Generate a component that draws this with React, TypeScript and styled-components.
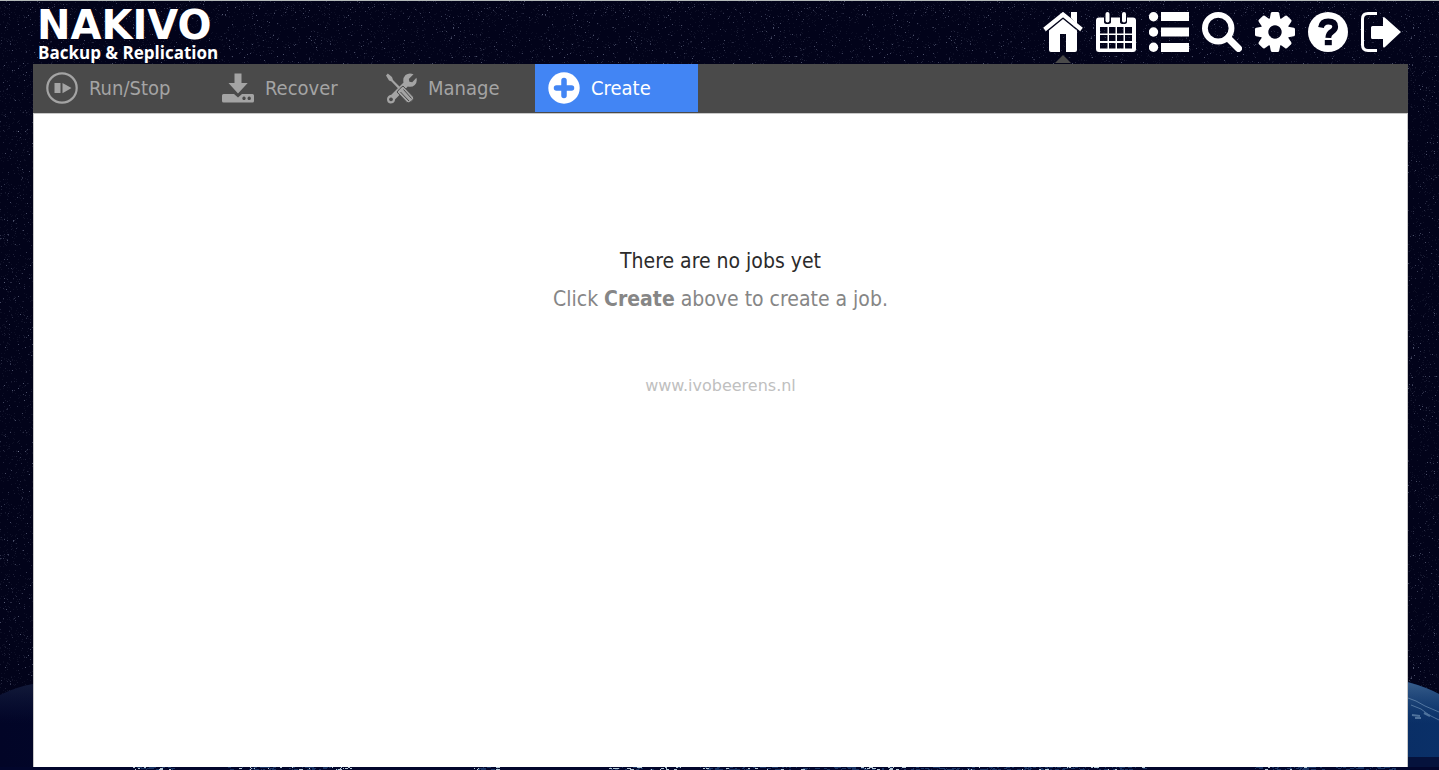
import React from 'react';
import styled, { createGlobalStyle } from 'styled-components';

const GlobalStyle = createGlobalStyle`
  *, *::before, *::after { box-sizing: border-box; }
  body {
    margin: 0;
    background: #02031a;
    font-family: "DejaVu Sans Condensed", "DejaVu Sans", Tahoma, sans-serif;
    font-stretch: condensed;
  }
`;

const Page = styled.div`
  position: relative;
  isolation: isolate;
  display: flex;
  flex-direction: column;
  min-height: 100vh;
  padding: 0 31px 3px 33px;
  border-top: 1px solid #b4bab9;
  overflow: hidden;
`;

const Sky = styled.svg`
  position: absolute;
  inset: 0;
  z-index: -1;
  width: 100%;
  height: 100%;
`;

const Header = styled.header`
  display: flex;
  justify-content: space-between;
  height: 63px;
  padding: 0 7px 0 4px;
`;

const Brand = styled.a`
  display: flex;
  flex-direction: column;
  padding-top: 5px;
  color: #fff;
  text-decoration: none;
  white-space: nowrap;
`;

const BrandName = styled.span`
  font: 700 40px/38px "DejaVu Sans", sans-serif;
`;

const BrandTag = styled.span`
  padding-left: 1px;
  font: 700 17px/18px "Open Sans", sans-serif;
`;

const MainNav = styled.nav`
  display: flex;
  gap: 13px;
  padding-top: 11px;
`;

const NavButton = styled.button<{ $current?: boolean }>`
  position: relative;
  width: 40px;
  height: 40px;
  padding: 0;
  border: 0;
  background: none;
  color: #fff;
  cursor: pointer;

  &::after {
    content: "";
    display: ${(p) => (p.$current ? 'block' : 'none')};
    position: absolute;
    top: 43px;
    left: 12px;
    border: solid transparent;
    border-width: 0 8px 8px;
    border-bottom-color: #4a4a4a;
  }
`;

const NavIcon = styled.svg`
  display: block;
  width: 40px;
  height: 40px;
`;

const Toolbar = styled.div`
  display: flex;
  height: 49px;
  padding-bottom: 1px;
  background: #4a4a4a;
`;

const ToolButton = styled.button<{ $active?: boolean; $wide?: boolean }>`
  display: flex;
  align-items: center;
  gap: 11px;
  width: ${(p) => (p.$wide ? 176 : 163)}px;
  padding: 0 13px;
  border: 0;
  background: ${(p) => (p.$active ? '#4285f4' : 'transparent')};
  color: ${(p) => (p.$active ? '#fff' : '#a4a4a4')};
  font: inherit;
  font-size: 20px;
  line-height: 24px;
  white-space: nowrap;
  cursor: pointer;
`;

const ToolIcon = styled.svg`
  flex: none;
  width: 32px;
  height: 32px;
`;

const Content = styled.main`
  flex: 1;
  display: flex;
  flex-direction: column;
  align-items: center;
  padding-top: 128px;
  border: 1px solid #c8c8c8;
  border-bottom: 0;
  background: #fff;
  text-align: center;
`;

const Title = styled.h1`
  margin: 0;
  color: #2b2b2b;
  font-size: 21px;
  font-weight: 400;
  line-height: 38px;
`;

const Hint = styled.p`
  margin: 0;
  color: #868686;
  font-size: 21px;
  line-height: 38px;
`;

const SiteLink = styled.a`
  margin-top: 56px;
  color: #c0c0c0;
  font: 16px/24px "DejaVu Sans", Verdana, sans-serif;
  text-decoration: none;
`;

const makeRandom = (start: number) => {
  let seed = start;
  return () => {
    seed = (seed * 1103515245 + 12345) % 2147483648;
    return seed / 2147483648;
  };
};

/* Deterministic star field, repeated as a tile. */
const TILE = 320;
const stars = (() => {
  const next = makeRandom(7);
  return Array.from({ length: 8000 }, () => ({
    x: Math.floor(next() * TILE),
    y: Math.floor(next() * TILE),
    o: 0.06 + Math.pow(next(), 6) * 0.36,
  }));
})();

/* City lights and clouds along the bottom edge of the window: start, end, share of bright ones. */
const lights = (() => {
  const next = makeRandom(31);
  const zones = [
    [130, 180, 0.2],
    [228, 335, 0.25],
    [332, 356, 0.8],
    [470, 502, 0.3],
    [608, 650, 0.3],
    [650, 682, 0.7],
    [700, 860, 0.15],
    [860, 910, 0.7],
    [910, 1150, 0.12],
    [1255, 1400, 0.05],
  ];
  return zones.flatMap(([from, to, share]) =>
    Array.from({ length: Math.round((to - from) / 2) }, () => ({
      x: from + Math.floor(next() * (to - from - 4)),
      y: 766 + Math.floor(next() * 3),
      w: 1 + Math.floor(next() * 4),
      bright: next() < share,
    })),
  );
})();

function Background() {
  return (
    <Sky viewBox="0 0 1439 769" preserveAspectRatio="none" aria-hidden="true">
      <defs>
        <pattern id="stars" width={TILE} height={TILE} patternUnits="userSpaceOnUse">
          {stars.map((s, i) => (
            <rect key={i} x={s.x} y={s.y} width="1" height="1" fill="#b9c2e0" opacity={s.o} />
          ))}
        </pattern>
        <linearGradient id="earth" x1="0" x2="1" y1="0" y2="0">
          <stop offset="0" stopColor="#020527" />
          <stop offset="0.5" stopColor="#04103a" />
          <stop offset="1" stopColor="#0a3068" />
        </linearGradient>
        <linearGradient id="haze" x1="0" x2="0" y1="680" y2="722" gradientUnits="userSpaceOnUse">
          <stop offset="0" stopColor="#4b7099" stopOpacity="0.75" />
          <stop offset="1" stopColor="#204d80" stopOpacity="0" />
        </linearGradient>
        <linearGradient id="dusk" x1="0" x2="0" y1="680" y2="722" gradientUnits="userSpaceOnUse">
          <stop offset="0" stopColor="#1c2642" stopOpacity="0.7" />
          <stop offset="1" stopColor="#101a40" stopOpacity="0" />
        </linearGradient>
      </defs>
      <rect width="1439" height="769" fill="#02031a" />
      <rect width="1439" height="769" fill="url(#stars)" />
      <path d="M0 694 Q16 686 33 683 Q720 420 1408 681 Q1426 686 1439 693 V769 H0Z" fill="url(#earth)" />
      <path d="M0 694 Q16 686 33 683 V730 H0Z" fill="url(#dusk)" />
      <path d="M1407 681 Q1426 686 1439 693 V735 H1407Z" fill="url(#haze)" />
      <g fill="none" stroke="#8fb0cf" opacity="0.5">
        <path d="M1408 697l8 3 9 5 14 6M1411 704l10 4 8 6 10 5" />
        <path d="M1412 714l8 1M1415 717l6 0M1424 712l6 3" strokeWidth="2" />
      </g>
      <rect x="1407" y="756" width="32" height="13" fill="#05123c" />
      <rect y="766" width="1439" height="3" fill="#02062c" />
      {lights.map((l, i) => (
        <rect key={i} x={l.x} y={l.y} width={l.w} height="1" fill={l.bright ? '#b4c8d6' : '#1a3464'} />
      ))}
    </Sky>
  );
}

const gearTeeth = [0, 45, 90, 135, 180, 225, 270, 315];

const navItems: { label: string; current?: boolean; icon: React.ReactNode }[] = [
  {
    label: 'Home',
    current: true,
    icon: (
      <>
        <path d="M28 0h6v12l-6-6z" fill="currentColor" />
        <path d="M1.500 17.500 20 2.500l18.500 15" fill="none" stroke="currentColor" strokeWidth="4.200" />
        <path d="M20 7 34 18.500V38q0 2-2 2h-9V22h-6v18H8q-2 0-2-2V18.500z" fill="currentColor" />
      </>
    ),
  },
  {
    label: 'Calendar',
    icon: (
      <>
        <path
          d="M3 5.500h5V10q0 2 3.500 2T15 10V5.500h9V10q0 2 3.500 2T31 10V5.500h6q3 0 3 3V37q0 3-3 3H3q-3 0-3-3V8.500q0-3 3-3zM4 15v6.500h7.500V15zm9 0v6.500h6.500V15zm8 0v6.500h6.500V15zm8 0v6.500h7V15zM4 23v6h7.500v-6zm9 0v6h6.500v-6zm8 0v6h6.500v-6zm8 0v6h7v-6zM4 31v5.500h7.500V31zm9 0v5.500h6.500V31zm8 0v5.500h6.500V31zm8 0v5.500h7V31z"
          fill="currentColor"
          fillRule="evenodd"
        />
        <rect x="9.500" y="0" width="4" height="10.500" rx="2" fill="currentColor" />
        <rect x="26" y="0" width="4" height="10.500" rx="2" fill="currentColor" />
      </>
    ),
  },
  {
    label: 'Activities',
    icon: (
      <g fill="currentColor">
        <circle cx="4.500" cy="4.700" r="4.700" />
        <circle cx="4.500" cy="20" r="4.700" />
        <circle cx="4.500" cy="35.300" r="4.700" />
        <path d="M12 0h28v9H12zM12 15.500h28v9H12zM12 31h28v9H12z" />
      </g>
    ),
  },
  {
    label: 'Search',
    icon: (
      <g fill="none" stroke="currentColor">
        <circle cx="16.200" cy="16.200" r="13.300" strokeWidth="5.800" />
        <path d="m26 26 10.500 10.500" strokeWidth="7" strokeLinecap="round" />
      </g>
    ),
  },
  {
    label: 'Settings',
    icon: (
      <g fill="currentColor">
        {gearTeeth.map((a) => (
          <path key={a} d="M14.500 8 15.800 1.200Q16.100 0 17.200 0h5.600q1.100 0 1.400 1.200L25.500 8z" transform={`rotate(${a} 20 20)`} />
        ))}
        <path d="M20 5.500a14.500 14.500 0 1 0 .01 0zM20 13.300a6.700 6.700 0 1 1-.01 0z" fillRule="evenodd" />
      </g>
    ),
  },
  {
    label: 'Help',
    icon: (
      <>
        <circle cx="20" cy="20" r="20" fill="currentColor" />
        <path d="M13 15.500Q14 9.500 20.200 9.500q7 0 7 5.300 0 2.700-3.400 5-3.300 2.100-3.500 6" fill="none" stroke="#02031a" strokeWidth="5.800" />
        <path d="M16.800 28h7v5.200h-7z" fill="#02031a" />
      </>
    ),
  },
  {
    label: 'Log out',
    icon: (
      <>
        <path d="M16 1.500H7Q1.500 1.500 1.500 7v26q0 5.500 5.500 5.500h9" fill="none" stroke="currentColor" strokeWidth="3" />
        <path d="M10 15.500q0-1.500 1.500-1.500H22V6.500q0-2.500 2-.8L40 20 24 35q-2 1.500-2-1v-7H11.500q-1.500 0-1.500-1.500z" fill="currentColor" />
      </>
    ),
  },
];

const tools: { label: string; active?: boolean; wide?: boolean; icon: React.ReactNode }[] = [
  {
    label: 'Run/Stop',
    wide: true,
    icon: (
      <>
        <circle cx="16" cy="16" r="14.700" fill="none" stroke="currentColor" strokeWidth="2.200" />
        <path d="M8.500 11h6v10h-6zM16.500 11 25.500 16l-9 5.200z" fill="currentColor" />
      </>
    ),
  },
  {
    label: 'Recover',
    icon: (
      <>
        <path d="M12.500 1.500h7V11h6.200L16 21.500 6.500 11h6z" fill="currentColor" />
        <path
          d="M1.500 22H12l4 3.500 4-3.500h10.500q1.500 0 1.500 1.500V29q0 1.500-1.500 1.500h-29Q0 30.500 0 29v-5.500Q0 22 1.500 22zM22 24.600a1.700 1.700 0 1 0 .01 0zM27.200 24.600a1.700 1.700 0 1 0 .01 0z"
          fill="currentColor"
          fillRule="evenodd"
        />
      </>
    ),
  },
  {
    label: 'Manage',
    icon: (
      <>
        <path d="m1 3.500 1.800-2L7 5l1 3 8.500 8.500-1.700 1.700L6.500 9.500 4 8.500z" fill="currentColor" />
        <path
          d="M28.500 2.200 23.800 7l.6 2.800 2.800.5 4.200-4.500q1.200 4.500-1.600 7.200-3 2.700-7 1.500L10 27.500q.2 4-4.800 4Q2 31 2 27q.2-3.500 4.300-4.200L18.500 10.500Q17.500 6.200 20.500 3q3.500-2.600 8-.8zM6 25.500a1.900 1.900 0 1 0 .01 0z"
          fill="currentColor"
          fillRule="evenodd"
        />
        <path d="m15 16.500 3-2.500 10.500 11q1.200 1.500-2 4.200-3 2.500-4.500 1.300L12 20z" fill="currentColor" stroke="#4a4a4a" />
        <path d="m15.500 20 8.500 9M18.500 17.500l8 9" fill="none" stroke="#4a4a4a" />
      </>
    ),
  },
  {
    label: 'Create',
    active: true,
    icon: (
      <>
        <circle cx="16" cy="16" r="15.700" fill="currentColor" />
        <path d="M16 8.500v15M8.500 16h15" stroke="#4285f4" strokeWidth="5.500" strokeLinecap="round" />
      </>
    ),
  },
];

export default function App() {
  return (
    <>
      <GlobalStyle />
      <Page>
        <Background />
        <Header>
          <Brand href="#">
            <BrandName>NAKIVO</BrandName>
            <BrandTag>Backup &amp; Replication</BrandTag>
          </Brand>
          <MainNav aria-label="Main">
            {navItems.map((item) => (
              <NavButton key={item.label} type="button" aria-label={item.label} $current={item.current}>
                <NavIcon viewBox="0 0 40 40" aria-hidden="true">{item.icon}</NavIcon>
              </NavButton>
            ))}
          </MainNav>
        </Header>
        <Toolbar role="toolbar" aria-label="Jobs">
          {tools.map((tool) => (
            <ToolButton key={tool.label} type="button" $active={tool.active} $wide={tool.wide}>
              <ToolIcon viewBox="0 0 32 32" aria-hidden="true">{tool.icon}</ToolIcon>
              {tool.label}
            </ToolButton>
          ))}
        </Toolbar>
        <Content>
          <Title>There are no jobs yet</Title>
          <Hint>
            Click <strong>Create</strong> above to create a job.
          </Hint>
          <SiteLink href="#">www.ivobeerens.nl</SiteLink>
        </Content>
      </Page>
    </>
  );
}
